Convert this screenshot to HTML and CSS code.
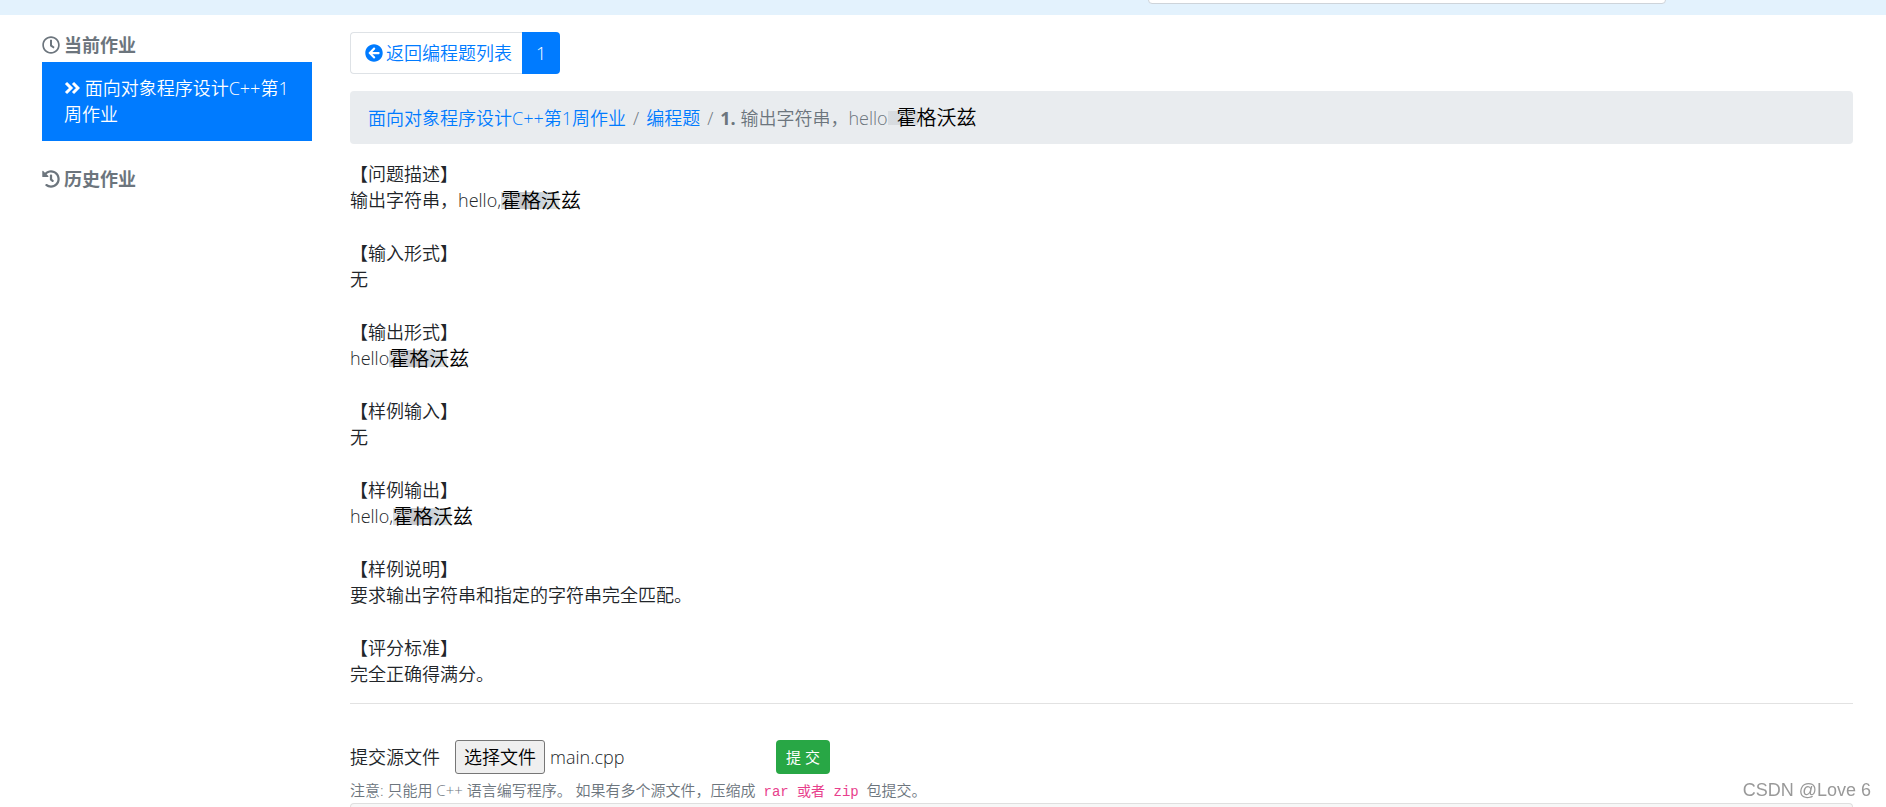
FILE: index.html
```
<!DOCTYPE html>
<html lang="zh-CN">
<head>
<meta charset="utf-8">
<title>面向对象程序设计C++第1周作业</title>
<link rel="stylesheet" href="styles.css">
</head>

<body>
<div class="topbar">
	<input type="text" class="search" aria-label="搜索">
</div>

<div class="wrap">
	<div class="sidebar">
		<h6 class="side-title">
			<svg class="icon" viewBox="0 0 512 512"><path d="M256 8C119 8 8 119 8 256s111 248 248 248 248-111 248-248S393 8 256 8zm0 448c-110.500 0-200-89.500-200-200S145.500 56 256 56s200 89.500 200 200-89.500 200-200 200zm61.800-104.400l-84.900-61.700c-3.100-2.300-4.900-5.900-4.900-9.700V116c0-6.600 5.400-12 12-12h32c6.600 0 12 5.400 12 12v141.700l66.800 48.600c5.400 3.900 6.500 11.400 2.600 16.800L334.600 349c-3.900 5.300-11.400 6.500-16.800 2.600z"/></svg>
			当前作业
		</h6>
		<a href="#" class="side-link"><svg class="icon-angle" viewBox="0 0 16 14"><path d="M2 2l5 5-5 5M9 2l5 5-5 5"/></svg> 面向对象程序设计C++第1周作业</a>
		<h6 class="side-title">
			<svg class="icon" viewBox="0 0 512 512"><path d="M504 255.531c.253 136.640-111.180 248.372-247.820 248.468-59.015.042-113.223-20.530-155.822-54.911-11.077-8.940-11.905-25.541-1.839-35.607l11.267-11.267c8.609-8.609 22.353-9.551 31.891-1.984C173.062 425.135 212.781 440 256 440c101.705 0 184-82.311 184-184 0-101.705-82.311-184-184-184-48.814 0-93.149 18.969-126.068 49.932l50.754 50.754c10.080 10.080 2.941 27.314-11.313 27.314H24c-8.837 0-16-7.163-16-16V38.627c0-14.254 17.234-21.393 27.314-11.314l49.372 49.372C129.209 34.136 189.552 8 256 8c136.810 0 247.747 110.780 248 247.531zm-180.912 78.784l9.823-12.630c8.138-10.463 6.253-25.542-4.210-33.679L288 256.349V152c0-13.255-10.745-24-24-24h-16c-13.255 0-24 10.745-24 24v135.651l65.409 50.874c10.463 8.137 25.541 6.253 33.679-4.210z"/></svg>
			历史作业
		</h6>
	</div>

	<div class="main">
		<div class="btn-group">
			<a href="#" class="btn-back">
				<svg class="icon" viewBox="0 0 512 512"><path d="M256 504C119 504 8 393 8 256S119 8 256 8s248 111 248 248-111 248-248 248zm28.900-143.600L209.400 288H392c13.300 0 24-10.700 24-24v-16c0-13.300-10.700-24-24-24H209.400l75.500-72.400c9.700-9.300 9.900-24.800.4-34.300l-11-10.900c-9.400-9.400-24.600-9.400-33.900 0L107.700 239c-9.400 9.400-9.400 24.600 0 33.900l132.700 132.700c9.400 9.400 24.600 9.400 33.900 0l11-10.900c9.500-9.500 9.300-25-.4-34.300z"/></svg>
				返回编程题列表
			</a>
			<a href="#" class="btn-page">1</a>
		</div>

		<ol class="breadcrumb">
			<li><a href="#">面向对象程序设计C++第1周作业</a></li>
			<li><a href="#">编程题</a></li>
			<li><b>1.</b> 输出字符串，hello<span class="name name-light">霍格沃兹</span></li>
		</ol>

		<div class="desc">
			<p>【问题描述】<br>输出字符串，hello,<span class="name">霍格沃兹</span></p>
			<p>【输入形式】<br>无</p>
			<p>【输出形式】<br>hello<span class="name">霍格沃兹</span></p>
			<p>【样例输入】<br>无</p>
			<p>【样例输出】<br>hello,<span class="name">霍格沃兹</span></p>
			<p>【样例说明】<br>要求输出字符串和指定的字符串完全匹配。</p>
			<p>【评分标准】<br>完全正确得满分。</p>
		</div>
		<hr>

		<form class="upload">
			<label for="source">提交源文件</label>
			<input type="file" id="source" hidden>
			<div class="file">
				<button type="button" class="btn-file" id="pick">选择文件</button>
				<span id="filename">main.cpp</span>
			</div>
			<button type="submit" class="btn-submit">提 交</button>
		</form>
		<div class="note">注意: 只能用 C++ 语言编写程序。 如果有多个源文件，压缩成 <code>rar 或者 zip</code> 包提交。</div>
		<div class="card"></div>
	</div>
</div>

<div class="watermark">CSDN @Love 6</div>

<script>
var source=document.getElementById("source");
document.getElementById("pick").onclick=function(){
	source.click();
}
source.onchange=function(){
	if(source.files.length)
		document.getElementById("filename").textContent=source.files[0].name;
}
</script>
</body>
</html>
```
FILE: styles.css
```
*{box-sizing:border-box;}
html{height:100%;}
body{
	display:flex;
	flex-direction:column;
	min-height:100%;
	margin:0;
	font:350 18px/26px "Open Sans", "Noto Sans CJK SC", sans-serif;
	color:#212529;
	background:#fff;
}
a{color:#007bff; text-decoration:none;}
p{margin:0;}

.topbar{
	display:flex;
	align-items:flex-end;
	justify-content:flex-end;
	height:15px;
	padding:0 220px 11px 0;
	background:#e3f2fd;
}
.search{
	flex:none;
	width:518px;
	height:42px;
	border:1px solid #ced4da;
	border-radius:4px;
	background:#fff;
}

.wrap{flex:1; display:flex; gap:38px; padding:17px 33px 0 42px;}
.sidebar{flex:none; width:270px;}
.main{flex:1; min-width:0; display:flex; flex-direction:column;}

.icon{width:18px; height:18px; fill:currentColor; flex:none;}
.side-title{
	display:flex;
	align-items:center;
	gap:4px;
	margin:0;
	padding-bottom:4px;
	font-size:18px;
	line-height:26px;
	font-weight:700;
	color:#6c757d;
}
.side-link{
	display:block;
	margin-bottom:25px;
	padding:13px 22px 14px;
	background:#007bff;
	color:#fff;
}
.icon-angle{width:16px; height:14px; fill:none; stroke:currentColor; stroke-width:3;}

.btn-group{display:flex; height:42px; line-height:40px;}
.btn-back{
	display:flex;
	align-items:center;
	gap:3px;
	padding:0 10px 0 14px;
	border:1px solid #dee2e6;
	border-right:0;
	border-radius:4px 0 0 4px;
}
.btn-page{
	padding:1px 14px;
	border-radius:0 4px 4px 0;
	background:#007bff;
	color:#fff;
}

.breadcrumb{
	display:flex;
	list-style:none;
	height:53px;
	margin:17px 0;
	padding:14px 18px;
	border-radius:4px;
	background:#e9ecef;
	color:#6c757d;
}
.breadcrumb li+li:before{content:"/"; padding:0 7px;}

.name{
	display:inline-block;
	height:26px;
	vertical-align:top;
	font-size:20px;
	line-height:28px;
	color:#000;
	background:linear-gradient(90deg, #dcdee0, #c6c6ca 40%, #ccd4dc 70%, #e0e4e2) no-repeat 0 5px/58px 17px;
}
.name-light{
	padding-left:9px;
	line-height:26px;
	background:linear-gradient(90deg, #d8dce0, #d4d8dc) no-repeat 0 6px/30px 14px;
}

.desc{display:flex; flex-direction:column; gap:27px;}
hr{width:100%; margin:16px 0 36px; border:0; border-top:1px solid #e2e2e2;}

.upload{display:flex; align-items:center; height:34px;}
.file{display:flex; align-items:center; gap:5px; width:321px; margin-left:15px;}
.btn-file{
	height:34px;
	padding:0 8px;
	border:1px solid #767676;
	border-radius:3px;
	background:#efefef;
	font:inherit;
	color:#000;
}
.btn-submit{
	height:34px;
	padding:0 10px;
	border:0;
	border-radius:4px;
	background:#28a745;
	font:400 15px/24px "Open Sans", "Noto Sans CJK SC", sans-serif;
	color:#fff;
}
.note{margin:5px 0 1px; font-size:15px; line-height:22px; color:#6c757d;}
.note code{
	margin:0 4px;
	font:400 14px/20px "Liberation Mono", "Noto Sans CJK SC", monospace;
	color:#e83e8c;
}
.card{
	flex:1;
	border:1px solid #dfdfdf;
	border-bottom:0;
	border-radius:4px 4px 0 0;
	background:#f7f7f7;
}

.watermark{
	position:fixed;
	right:15px;
	bottom:4px;
	font:18px/26px "Liberation Sans", Arial, sans-serif;
	color:#999;
	text-shadow:-1px -1px 0 #fff;
}
```
